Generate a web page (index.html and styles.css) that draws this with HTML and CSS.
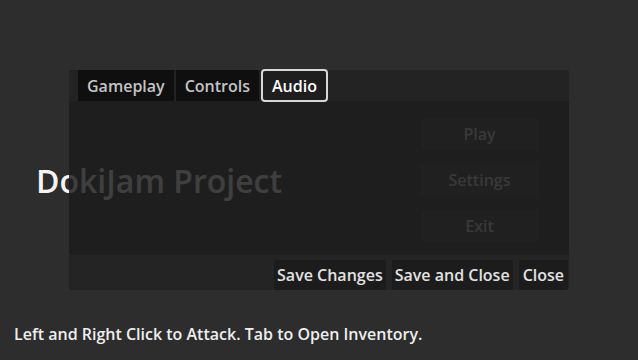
FILE: index.html
```html
<!DOCTYPE html>
<html>
<head>
    <link rel="stylesheet" href="styles.css">
</head>
<body>
    <div class="screen">
        <div class="mainMenu">
            <h1 class="title">DokiJam Project</h1>
            <div class="menuButtons">
                <button type="button">Play</button>
                <button type="button">Settings</button>
                <button type="button">Exit</button>
            </div>
        </div>

        <p class="hint">Left and Right Click to Attack. Tab to Open Inventory.</p>

        <div class="settingsPanel">
            <div class="tabs">
                <span class="tab">Gameplay</span>
                <span class="tab">Controls</span>
                <span class="tab active">Audio</span>
            </div>
            <div class="tabBody"></div>
            <div class="actions">
                <button type="button">Save Changes</button>
                <button type="button">Save and Close</button>
                <button type="button">Close</button>
            </div>
        </div>
    </div>
</body>
</html>
```

FILE: styles.css
```css
body {
    margin: 0;
    padding: 0;
    background-color: #2d2d2d;
    font-family: 'Open Sans', 'Noto Sans', sans-serif;
    font-weight: 600;
    color: #e6e6e6;
}
.screen {
    position: relative;
    display: flex;
    flex-direction: column;
    width: 638px;
    height: 360px;
    overflow: hidden;
}
.mainMenu {
    display: flex;
    align-items: center;
    justify-content: space-between;
    padding: 118px 100px 0 36px;
}
.title {
    margin: 0;
    font-size: 32px;
    font-weight: 600;
    color: #f4f4f4;
}
.menuButtons {
    display: flex;
    flex-direction: column;
    gap: 14px;
}
.menuButtons button {
    width: 117px;
    height: 32px;
    border: none;
    border-radius: 3px;
    background-color: #3c3c3c;
    color: #cccccc;
    font-family: inherit;
    font-weight: 600;
    font-size: 16px;
}
.hint {
    margin: auto 0 0;
    padding: 0 14px 15px;
    font-size: 16px;
    line-height: 22px;
    color: #eeeeee;
}
.settingsPanel {
    position: absolute;
    left: 69px;
    top: 70px;
    width: 500px;
    height: 220px;
    display: flex;
    flex-direction: column;
    background-color: rgba(27, 27, 27, 0.84);
    border-radius: 3px;
}
.tabs {
    display: flex;
    gap: 2px;
    padding-left: 9px;
    height: 31px;
    background-color: rgba(40, 40, 40, 0.5);
}
.tab {
    display: flex;
    align-items: center;
    padding: 0 9px;
    background-color: #0f0f0f;
    color: #c4c4c4;
    font-size: 16px;
}
.tab.active {
    margin-top: -1px;
    height: 29px;
    padding: 0 9px;
    border: 2px solid #d8d8d8;
    border-radius: 4px;
    background-color: #1e1e1e;
    color: #ffffff;
}
.tabBody {
    flex: 1;
}
.actions {
    display: flex;
    justify-content: flex-end;
    gap: 6px;
    height: 35px;
    padding: 5px 1px 0 0;
    box-sizing: border-box;
    background-color: rgba(45, 45, 45, 0.45);
}
.actions button {
    height: 30px;
    padding: 0 3px;
    border: none;
    border-radius: 3px;
    background-color: #1c1c1c;
    color: #e2e2e2;
    font-family: inherit;
    font-weight: 600;
    font-size: 16px;
}
.actions button:last-child {
    padding: 0 4px;
}
```
